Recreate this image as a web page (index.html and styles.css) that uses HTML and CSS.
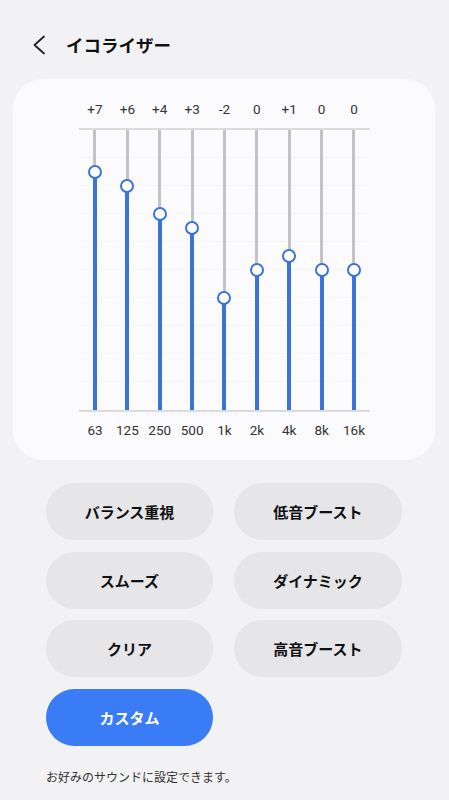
FILE: index.html
```html
<!DOCTYPE html>
<html lang="ja">
<head>
<meta charset="utf-8">
<title>イコライザー</title>
<link rel="stylesheet" href="styles.css">
</head>
<body>
<header class="header">
  <svg class="back" width="18" height="22" viewBox="0 0 18 22"><path d="M14 2.5 L4.5 11 L14 19.5" fill="none" stroke="#222" stroke-width="1.8" stroke-linecap="round" stroke-linejoin="round"/></svg>
  <h1 class="title">イコライザー</h1>
</header>
<section class="card">
  <div class="eq">
    <div class="values">
      <span>+7</span><span>+6</span><span>+4</span><span>+3</span><span>-2</span><span>0</span><span>+1</span><span>0</span><span>0</span>
    </div>
    <div class="tracks">
      <div class="band"><div class="rest"></div><div class="knob"></div><div class="fill" style="height:238px"></div></div>
      <div class="band"><div class="rest"></div><div class="knob"></div><div class="fill" style="height:224px"></div></div>
      <div class="band"><div class="rest"></div><div class="knob"></div><div class="fill" style="height:196px"></div></div>
      <div class="band"><div class="rest"></div><div class="knob"></div><div class="fill" style="height:182px"></div></div>
      <div class="band"><div class="rest"></div><div class="knob"></div><div class="fill" style="height:112px"></div></div>
      <div class="band"><div class="rest"></div><div class="knob"></div><div class="fill" style="height:140px"></div></div>
      <div class="band"><div class="rest"></div><div class="knob"></div><div class="fill" style="height:154px"></div></div>
      <div class="band"><div class="rest"></div><div class="knob"></div><div class="fill" style="height:140px"></div></div>
      <div class="band"><div class="rest"></div><div class="knob"></div><div class="fill" style="height:140px"></div></div>
    </div>
    <div class="freqs">
      <span>63</span><span>125</span><span>250</span><span>500</span><span>1k</span><span>2k</span><span>4k</span><span>8k</span><span>16k</span>
    </div>
  </div>
</section>
<div class="presets">
  <button class="preset">バランス重視</button>
  <button class="preset">低音ブースト</button>
  <button class="preset">スムーズ</button>
  <button class="preset">ダイナミック</button>
  <button class="preset">クリア</button>
  <button class="preset">高音ブースト</button>
  <button class="preset active">カスタム</button>
</div>
<p class="note">お好みのサウンドに設定できます。</p>
</body>
</html>
```
FILE: styles.css
```css
html, body {
  margin: 0;
  padding: 0;
}
body {
  background: #f2f2f4;
  font-family: "Noto Sans CJK JP", "Noto Sans", sans-serif;
  color: #111;
  width: 449px;
  height: 800px;
  overflow: hidden;
}
.header {
  box-sizing: border-box;
  height: 79px;
  padding-top: 11px;
  padding-left: 30px;
  display: flex;
  align-items: center;
}
.back {
  display: block;
  margin-right: 18px;
}
.title {
  margin: 0;
  font-size: 17.5px;
  font-weight: 700;
  line-height: 24px;
  color: #111;
}
.card {
  box-sizing: border-box;
  margin-left: 13px;
  width: 422px;
  height: 381px;
  background: #fbfbfd;
  border-radius: 30px;
  padding-top: 20px;
}
.eq {
  margin-left: 65.8px;
  width: 291.4px;
}
.values, .freqs, .tracks {
  display: grid;
  grid-template-columns: repeat(9, 1fr);
}
.values span, .freqs span {
  text-align: center;
  font-family: Roboto, "Noto Sans", sans-serif;
  font-size: 13.5px;
  line-height: 20px;
  color: #333;
}
.values {
  margin-bottom: 9px;
}
.tracks {
  height: 280px;
  border-top: 2px solid #dcdcde;
  border-bottom: 2px solid #dcdcde;
  background: repeating-linear-gradient(to bottom, transparent 0, transparent 27px, #f5f5f8 27px, #f5f5f8 28px);
}
.band {
  display: flex;
  flex-direction: column;
  align-items: center;
}
.rest {
  flex: 1;
  width: 3px;
  background: #c3c3c6;
}
.knob {
  position: relative;
  z-index: 1;
  box-sizing: border-box;
  width: 14px;
  height: 14px;
  margin: -7px 0;
  border: 2px solid #3b74d8;
  border-radius: 50%;
  background: #fff;
  flex: none;
}
.fill {
  width: 4px;
  background: #3b74d8;
  flex: none;
}
.freqs {
  margin-top: 8px;
}
.presets {
  margin: 23px 0 0 46px;
  width: 356px;
  display: grid;
  grid-template-columns: 167px 168px;
  column-gap: 21px;
  row-gap: 11.5px;
}
.preset {
  height: 57px;
  border: none;
  border-radius: 29px;
  background: #e6e6e8;
  font-family: "Noto Sans CJK JP", sans-serif;
  font-size: 15px;
  font-weight: 700;
  color: #111;
  padding: 0;
}
.preset.active {
  background: #3a7cf5;
  color: #fff;
}
.note {
  margin: 22px 0 0 46px;
  font-size: 12px;
  line-height: 18px;
  color: #333;
}
```
